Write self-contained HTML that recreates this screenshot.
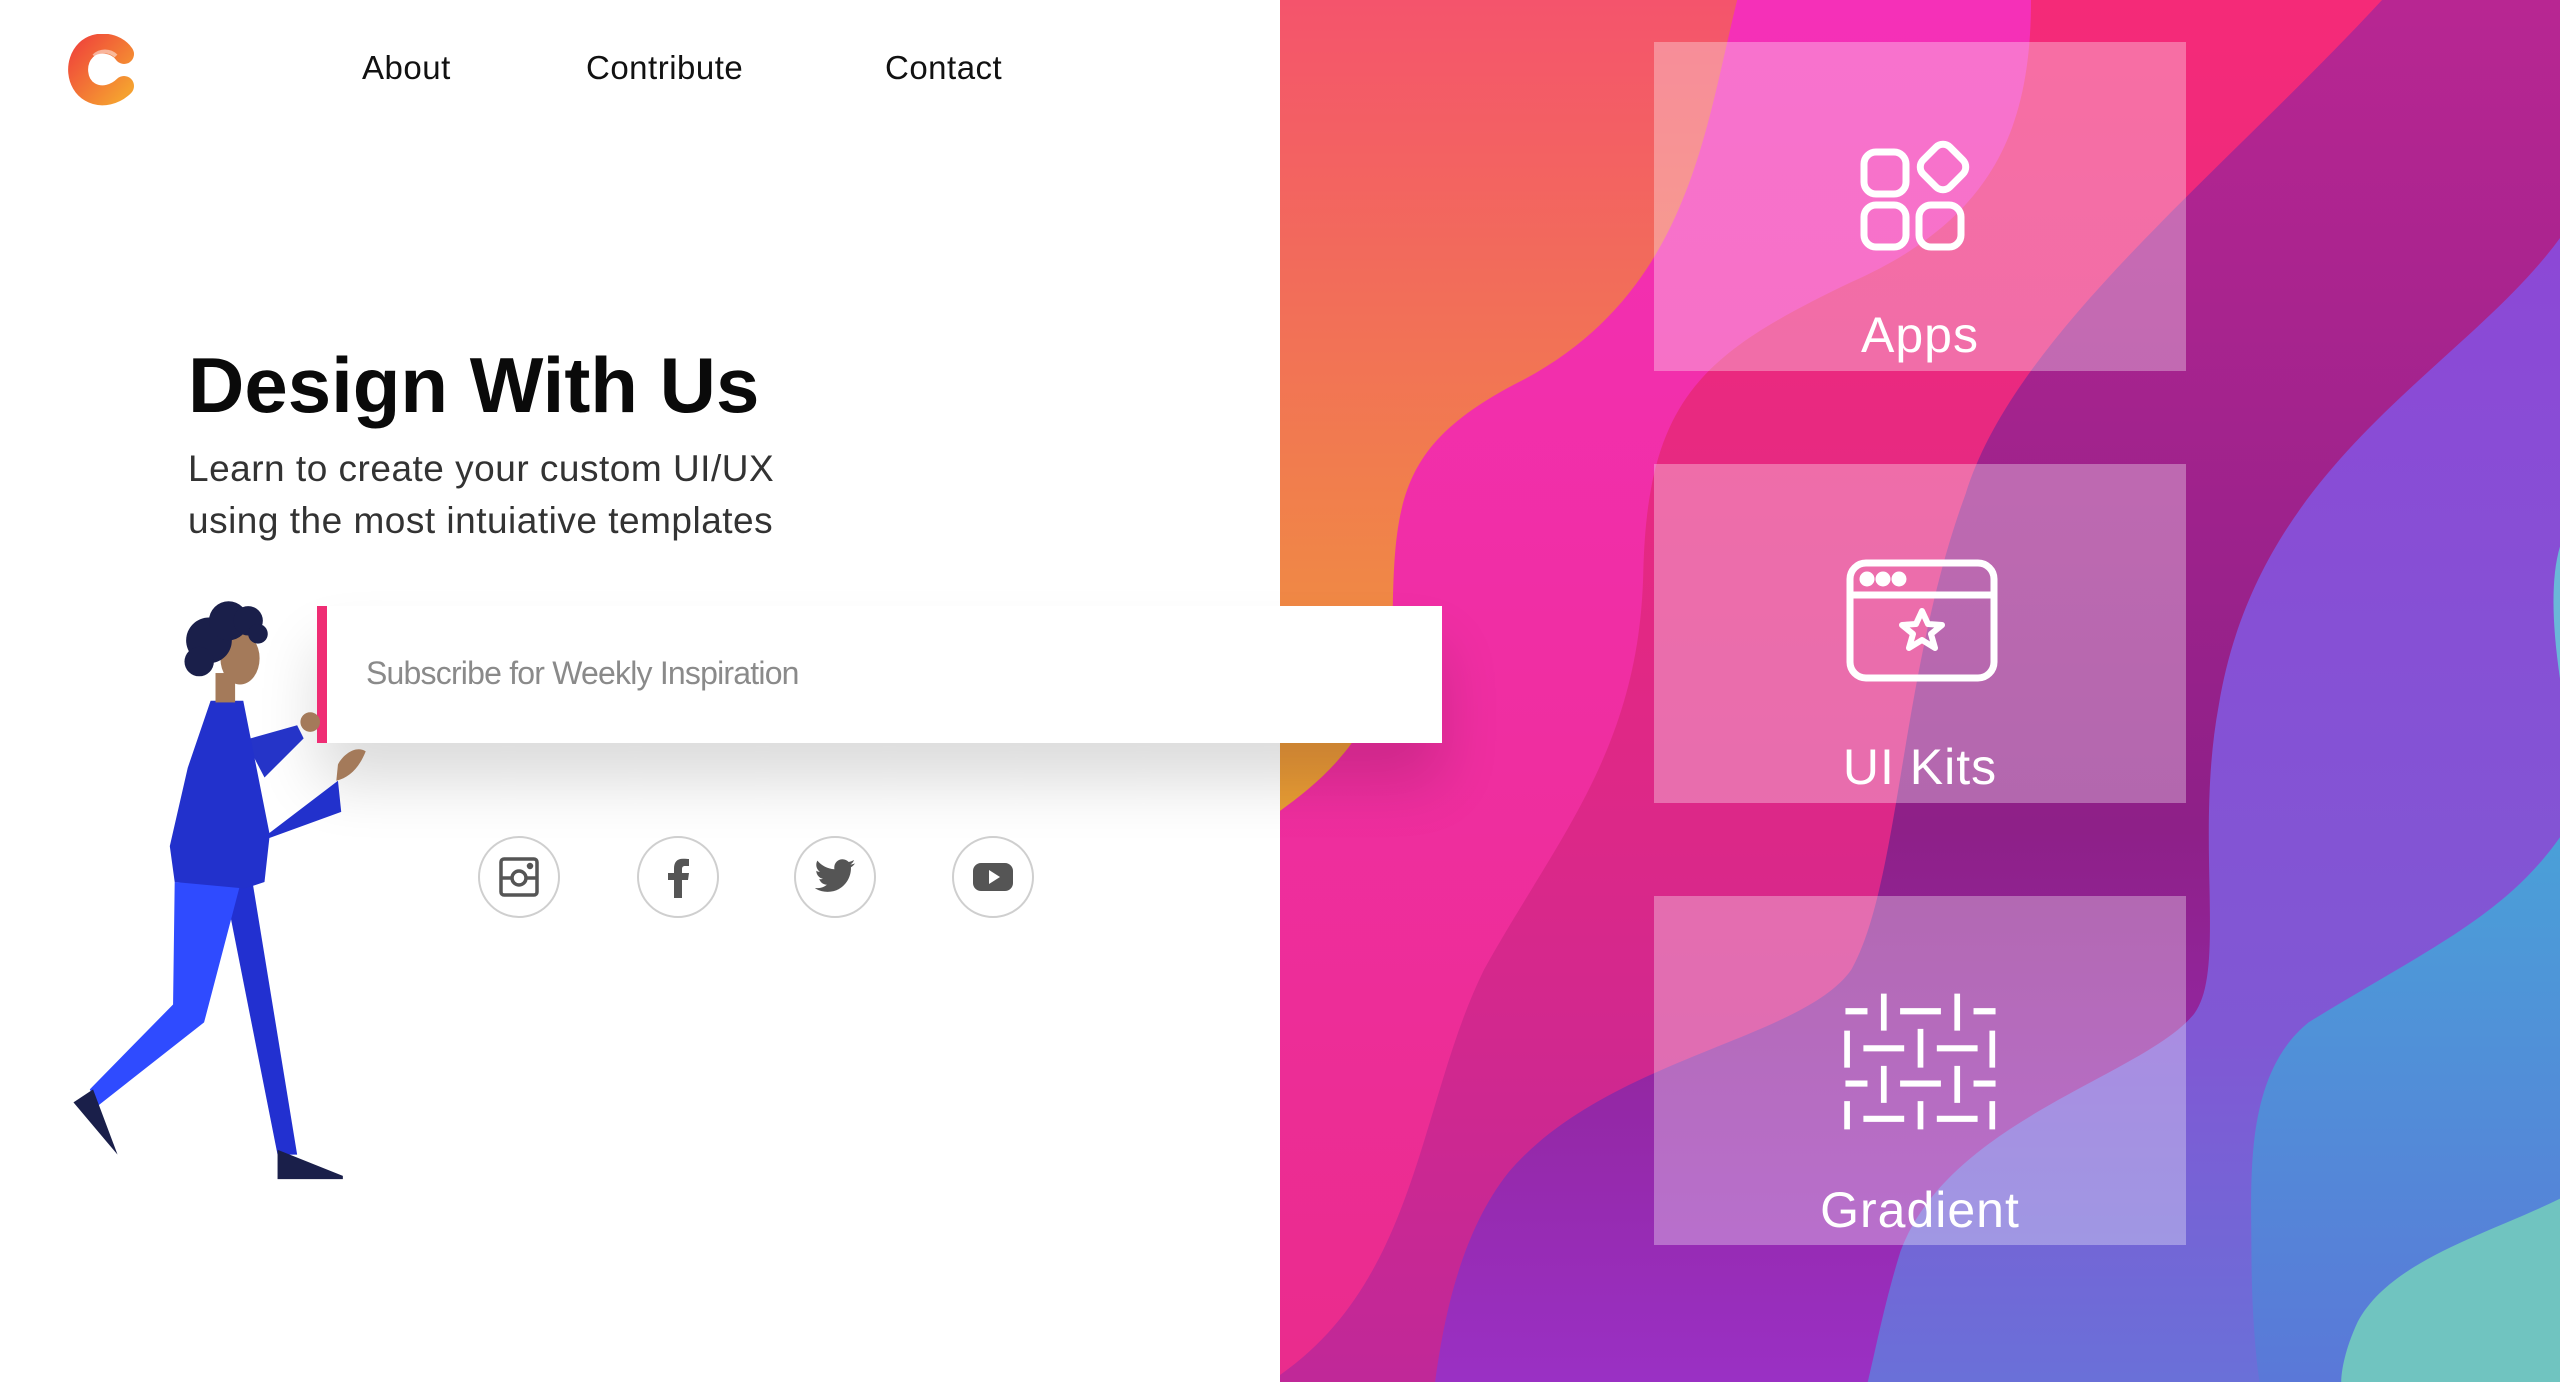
<!DOCTYPE html>
<html><head><meta charset="utf-8"><style>
*{margin:0;padding:0;box-sizing:border-box}
body{width:2560px;height:1382px;overflow:hidden;background:#fff;font-family:"Liberation Sans",sans-serif;position:relative}
.abs{position:absolute}
.nav{position:absolute;top:49px;font-size:33px;color:#111;letter-spacing:0.5px}
.card{position:absolute;left:1654px;width:532px;background:rgba(255,255,255,0.32)}
.lbl{position:absolute;width:532px;left:1654px;text-align:center;color:#fff;font-size:50px;letter-spacing:1px}
.soc{position:absolute;width:82px;height:82px;border:2px solid #cfcfcf;border-radius:50%;top:836px;display:flex;align-items:center;justify-content:center}
</style></head><body>

<svg class="abs" style="left:1280px;top:0" width="1280" height="1382" viewBox="0 0 1568 1568" preserveAspectRatio="none">
<defs>
<linearGradient id="g0" x1="0" y1="0" x2="0" y2="1"><stop offset="0" stop-color="#f4546c"/><stop offset="0.45" stop-color="#f08a44"/><stop offset="0.6" stop-color="#e8a032"/></linearGradient>
<linearGradient id="g1" x1="0" y1="0" x2="0" y2="1"><stop offset="0" stop-color="#f530b8"/><stop offset="1" stop-color="#ea2c8c"/></linearGradient>
<linearGradient id="g2" x1="0" y1="0" x2="0" y2="1"><stop offset="0" stop-color="#f52a78"/><stop offset="0.6" stop-color="#dc2888"/><stop offset="1" stop-color="#c02898"/></linearGradient>
<linearGradient id="g3" x1="0" y1="0" x2="0" y2="1"><stop offset="0" stop-color="#b82692"/><stop offset="0.6" stop-color="#8e2088"/><stop offset="1" stop-color="#9a30c4"/></linearGradient>
<linearGradient id="g4" x1="0" y1="0" x2="0" y2="1"><stop offset="0" stop-color="#8c48d6"/><stop offset="0.7" stop-color="#8058d4"/><stop offset="1" stop-color="#6a70d8"/></linearGradient>
<linearGradient id="g5" x1="0" y1="0" x2="0" y2="1"><stop offset="0" stop-color="#4aa0d8"/><stop offset="1" stop-color="#5a78d8"/></linearGradient>
</defs>
<rect width="1568" height="1568" fill="url(#g0)"/>
<path d="M560 0 C520 150 500 330 300 430 C150 500 140 560 138 700 C135 820 60 880 0 920 L0 1568 L1568 1568 L1568 0Z" fill="url(#g1)"/>
<path d="M920 0 C920 150 870 250 700 320 C520 400 450 450 445 650 C440 850 340 950 250 1100 C170 1250 170 1450 0 1560 L0 1568 L1568 1568 L1568 0Z" fill="url(#g2)"/>
<path d="M1350 0 C1150 200 900 380 840 560 C760 760 760 1000 700 1100 C640 1180 400 1200 280 1330 C220 1400 200 1500 190 1568 L1568 1568 L1568 0Z" fill="url(#g3)"/>
<path d="M1568 270 C1450 420 1200 520 1150 800 C1120 950 1160 1100 1120 1150 C1060 1220 820 1270 760 1420 C740 1480 730 1530 720 1568 L1568 1568Z" fill="url(#g4)"/>
<path d="M1568 950 C1500 1040 1400 1080 1260 1160 C1180 1220 1190 1340 1190 1420 C1190 1480 1195 1540 1200 1568 L1568 1568Z" fill="url(#g5)"/>
<path d="M1568 1360 C1480 1400 1360 1430 1320 1500 C1305 1530 1300 1555 1300 1568 L1568 1568Z" fill="#70c4c0"/>
<path d="M1568 620 C1555 660 1560 720 1568 770Z" fill="#6ab8d8"/>
</svg>

<div class="card" style="top:42px;height:329px"></div>
<div class="card" style="top:464px;height:339px"></div>
<div class="card" style="top:896px;height:349px"></div>
<div class="lbl" style="top:306px">Apps</div>
<div class="lbl" style="top:738px">UI Kits</div>
<div class="lbl" style="top:1181px">Gradient</div>

<svg class="abs" style="left:1859px;top:137px" width="118" height="115" viewBox="0 0 118 115" fill="none" stroke="#fff" stroke-width="7">
<rect x="5" y="15" width="42" height="42" rx="12"/>
<rect x="5" y="68" width="42" height="42" rx="12"/>
<rect x="60" y="68" width="42" height="42" rx="12"/>
<rect x="65" y="11" width="38" height="38" rx="10" transform="rotate(45 84 30)"/>
</svg>

<svg class="abs" style="left:1845px;top:558px" width="155" height="126" viewBox="0 0 155 126" fill="none" stroke="#fff" stroke-width="7">
<rect x="5" y="5" width="144" height="115" rx="16"/>
<line x1="5" y1="37" x2="149" y2="37"/>
<circle cx="22" cy="21" r="4" fill="#fff"/><circle cx="38" cy="21" r="4" fill="#fff"/><circle cx="54" cy="21" r="4" fill="#fff"/>
<path d="M77 53 L83 66 L97 67 L86 76 L90 90 L77 82 L64 90 L68 76 L57 67 L71 66Z" stroke-linejoin="round" stroke-width="6"/>
</svg>

<svg class="abs" style="left:1843px;top:991px" width="155" height="141" viewBox="690 1125 190 160" preserveAspectRatio="none" fill="none" stroke="#fff" stroke-width="7">
<path d="M693 1148H720M760 1148H810M850 1148H877M740 1128V1170M830 1128V1170
M715 1190H765M805 1190H855M695 1170V1212M785 1168V1212M873 1170V1212
M693 1230H720M760 1230H810M850 1230H877M740 1210V1252M830 1210V1252
M715 1270H765M805 1270H855M695 1250V1282M785 1250V1282M873 1250V1282"/>
</svg>

<svg class="abs" style="left:66px;top:34px" width="70" height="74" viewBox="0 0 70 74">
<defs><linearGradient id="lg" x1="0" y1="0" x2="1" y2="1"><stop offset="0" stop-color="#f04a3a"/><stop offset="1" stop-color="#f5a030"/></linearGradient></defs>
<path d="M58 20 C50 8 30 6 20 16 C8 28 10 50 24 58 C36 65 50 60 58 52" fill="none" stroke="url(#lg)" stroke-width="20" stroke-linecap="round"/>
<path d="M50 22 C44 16 34 16 28 22" fill="none" stroke="#fff" stroke-width="4" opacity="0.5"/>
</svg>

<div class="nav" style="left:362px">About</div>
<div class="nav" style="left:586px">Contribute</div>
<div class="nav" style="left:885px">Contact</div>

<div class="abs" style="left:188px;top:340px;font-size:78px;font-weight:bold;color:#0a0a0a">Design With Us</div>
<div class="abs" style="left:188px;top:443px;font-size:37px;line-height:52px;color:#333;letter-spacing:0.5px">Learn to create your custom UI/UX<br>using the most intuiative templates</div>

<div class="abs" style="left:317px;top:606px;width:1125px;height:137px;background:#fff;box-shadow:0 40px 60px rgba(0,0,0,0.14)">
<div class="abs" style="left:0;top:0;width:10px;height:137px;background:#ef2d74"></div>
<div class="abs" style="left:49px;top:49px;font-size:32px;color:#8a8a8a;letter-spacing:-0.8px">Subscribe for Weekly Inspiration</div>
</div>

<div class="soc" style="left:478px"><svg width="42" height="42" viewBox="0 0 42 42" fill="none" stroke="#555" stroke-width="3.5"><rect x="3" y="3" width="36" height="36" rx="3"/><circle cx="21" cy="22" r="7"/><line x1="3" y1="22" x2="14" y2="22"/><line x1="28" y1="22" x2="39" y2="22"/><circle cx="32" cy="10" r="1.5" fill="#555"/></svg></div>
<div class="soc" style="left:637px"><svg width="30" height="42" viewBox="0 0 30 42"><path d="M19 42V24h6l1-7h-7v-4c0-2 1-3 3-3h4V3c-1 0-3-.3-6-.3-6 0-9 3.5-9 9.5V17H5v7h6v18z" fill="#555"/></svg></div>
<div class="soc" style="left:794px"><svg width="44" height="38" viewBox="0 0 24 20"><path d="M23 2.5c-.8.4-1.700.6-2.600.7.9-.6 1.600-1.400 2-2.500-.9.5-1.900.9-2.900 1.100C18.600.9 17.400.3 16.100.3c-2.500 0-4.500 2-4.500 4.500 0 .4 0 .7.1 1C7.900 5.600 4.600 3.800 2.400 1.100c-.4.7-.6 1.400-.6 2.300 0 1.600.8 2.900 2 3.800-.7 0-1.400-.2-2-.6 0 2.200 1.600 4 3.600 4.400-.4.1-.8.2-1.200.2-.3 0-.6 0-.8-.1.6 1.800 2.200 3.100 4.200 3.100-1.500 1.200-3.500 1.900-5.600 1.900H1c2 1.300 4.400 2 6.900 2 8.300 0 12.800-6.900 12.800-12.800v-.6c.9-.6 1.700-1.400 2.300-2.300z" fill="#555"/></svg></div>
<div class="soc" style="left:952px"><svg width="42" height="30" viewBox="0 0 42 30"><rect x="1" y="1" width="40" height="28" rx="8" fill="#555"/><path d="M17 8v14l11-7z" fill="#fff"/></svg></div>

<svg class="abs" style="left:0;top:0" width="1280" height="1382" viewBox="0 0 784 846">
<polygon points="137,540 155,542 182,707 170,707" fill="#2230d0"/>
<polygon points="107,540 147,542 125,626 60,677 55,667 106,615" fill="#2f4bff"/>
<polygon points="170,704 210,720 210,722 170,722" fill="#1a1f4a"/>
<polygon points="45,675 57,667 72,707" fill="#1a1f4a"/>
<polygon points="150,453 182,444 186,452 162,476" fill="#2534c8"/>
<circle cx="190" cy="442" r="6" fill="#a47a5a"/>
<path d="M207 468 C210 462 218 456 224 460 C220 470 214 476 206 478Z" fill="#a47a5a"/>
<polygon points="129,429 149,429 165,510 207,478 209,497 165,513 162,540 150,544 107,540 104,518 115,470" fill="#2231cc"/>
<rect x="132" y="412" width="12" height="18" fill="#a47a5a"/>
<ellipse cx="147" cy="403" rx="12" ry="16" fill="#a47a5a"/>
<circle cx="128" cy="392" r="14" fill="#1a1f4a"/><circle cx="140" cy="380" r="12" fill="#1a1f4a"/><circle cx="152" cy="380" r="9" fill="#1a1f4a"/><circle cx="122" cy="405" r="9" fill="#1a1f4a"/><circle cx="158" cy="388" r="6" fill="#1a1f4a"/>
</svg>

</body></html>
